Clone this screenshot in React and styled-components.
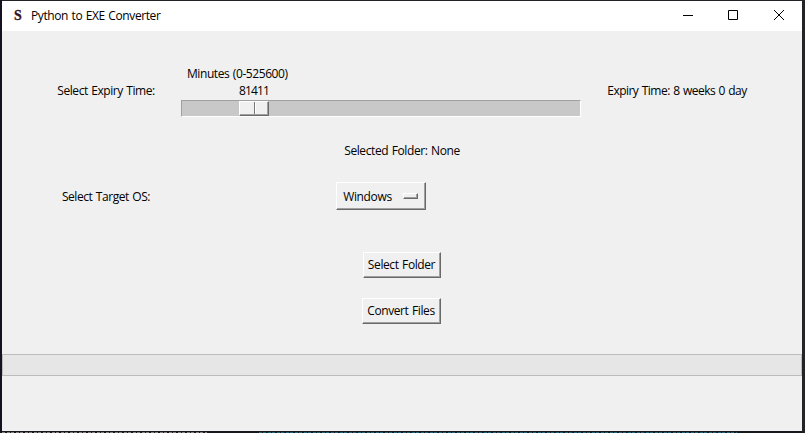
import React from "react";
import styled, { createGlobalStyle } from "styled-components";

const GlobalStyle = createGlobalStyle`
  * { box-sizing: border-box; }
  body { margin: 0; overflow: hidden; background: #18191d; }
`;

const Desktop = styled.div`
  width: 805px;
  height: 433px;
  padding: 1px 3px 0 2px;
  background: linear-gradient(90deg, #15121f 0 2px, #222326 2px);
  color: #000;
  font: 12px/16px "Open Sans", "Noto Sans", sans-serif;
`;

const AppWindow = styled.main`
  display: flex;
  flex-direction: column;
  height: 430px;
  background: #f0f0f0;
`;

const TitleBar = styled.header`
  display: flex;
  align-items: center;
  height: 30px;
  padding-left: 11px;
  background: #fff;
`;

const AppIcon = styled.span`
  width: 18px;
  color: #35101f;
  font: bold 14px/16px "Liberation Serif", serif;
  -webkit-text-stroke: 0.3px #35101f;
  padding-left: 1px;
`;

const Text = styled.span`
  white-space: nowrap;
  letter-spacing: ${({ $spacing = -0.45 }) => $spacing}px;
  word-spacing: 0.8px;
`;

const WindowControls = styled.div`
  display: flex;
  margin-left: auto;

  svg { display: block; width: 46px; height: 30px; fill: none; stroke: #000; }
`;

const FieldRow = styled.div`
  display: grid;
  grid-template-columns: 148px 400px 190px;
  column-gap: 1px;
  padding-left: 30px;
  margin-top: ${({ $top }) => $top}px;
`;

const Cell = styled.div`
  display: flex;
  justify-content: center;
  padding-top: ${({ $top = 0 }) => $top}px;
`;

const Scale = styled.div`
  display: flex;
  flex-direction: column;
`;

const ScaleCaption = styled.div`
  height: 17px;
  padding-left: ${({ $left }) => $left}px;
`;

const Trough = styled.div`
  height: 17px;
  padding-left: 57px;
  border: 1px solid;
  border-color: #a0a0a0 #fff #fff #a0a0a0;
  background: #c8c8c8;
`;

const Thumb = styled.div`
  display: flex;
  width: 30px;
  height: 15px;
  border: 1px solid;
  border-color: #fff #696969 #696969 #fff;
  box-shadow: inset -1px -1px #a0a0a0;
  background: #f0f0f0;

  &::before {
    content: "";
    width: 14px;
    height: 12px;
    border-right: 1px solid #777;
  }
  &::after {
    content: "";
    width: 1px;
    height: 12px;
    background: #fff;
  }
`;

const Status = styled.div`
  display: flex;
  justify-content: center;
  height: 16px;
  margin-top: 26px;
`;

const RaisedButton = styled.button`
  display: flex;
  align-items: center;
  justify-content: center;
  width: ${({ $width }) => $width}px;
  height: ${({ $height = 26 }) => $height}px;
  padding: ${({ $padTop = 0 }) => $padTop}px 1px 0 0;
  border: 1px solid;
  border-color: #fff #696969 #696969 #fff;
  border-radius: 0;
  box-shadow: inset -1px -1px #a0a0a0;
  background: #f0f0f0;
  color: #000;
  font: inherit;
`;

const MenuMark = styled.span`
  width: 15px;
  height: 6px;
  margin: 0 0 2px 11px;
  border: 1px solid;
  border-color: #fff #696969 #696969 #fff;
  box-shadow: inset -1px -1px #a0a0a0;
`;

const Actions = styled.div`
  display: flex;
  flex-direction: column;
  align-items: flex-end;
  gap: 20px;
  width: 439px;
  margin-top: 42px;
`;

const Progress = styled.div`
  height: 22px;
  margin-top: 30px;
  border: 1px solid #bcbcbc;
  background: #e6e6e6;
`;

const BackdropEdge = styled.div`
  height: 2px;
  background:
    repeating-linear-gradient(90deg, transparent 0 3px, #15171a 3px 5px, transparent 5px 8px, #15171a 8px 9px) 0 1px,
    linear-gradient(90deg, #85807c 0 205px, #15171a 205px 255px, #1c6177 255px 735px, #15171a 735px) 0 1px,
    #15171a;
  background-repeat: no-repeat;
`;

export default function App() {
  return (
    <>
      <GlobalStyle />
      <Desktop>
        <AppWindow>
          <TitleBar>
            <AppIcon>S</AppIcon>
            <Text $spacing={-0.4}>Python to EXE Converter</Text>
            <WindowControls>
              <svg viewBox="0 0 46 30"><path d="M19 14.5h10" /></svg>
              <svg viewBox="0 0 46 30"><path d="M18.5 9.5h9v9h-9z" /></svg>
              <svg viewBox="0 0 46 30"><path d="M18 9l10 10M28 9l-10 10" /></svg>
            </WindowControls>
          </TitleBar>
          <FieldRow $top={35}>
            <Cell $top={17}><Text>Select Expiry Time:</Text></Cell>
            <Scale>
              <ScaleCaption $left={6}><Text $spacing={-0.42}>Minutes (0-525600)</Text></ScaleCaption>
              <ScaleCaption $left={58}><Text $spacing={-0.85}>81411</Text></ScaleCaption>
              <Trough><Thumb /></Trough>
            </Scale>
            <Cell $top={17}><Text $spacing={-0.52}>Expiry Time: 8 weeks 0 day</Text></Cell>
          </FieldRow>
          <Status><Text $spacing={-0.4}>Selected Folder: None</Text></Status>
          <FieldRow $top={23}>
            <Cell $top={7}><Text>Select Target OS:</Text></Cell>
            <Cell>
              <RaisedButton $width={90} $height={28} $padTop={2}>
                <Text $spacing={-0.35}>Windows</Text>
                <MenuMark />
              </RaisedButton>
            </Cell>
          </FieldRow>
          <Actions>
            <RaisedButton $width={78}><Text $spacing={-0.4}>Select Folder</Text></RaisedButton>
            <RaisedButton $width={79}><Text $spacing={-0.4}>Convert Files</Text></RaisedButton>
          </Actions>
          <Progress />
        </AppWindow>
        <BackdropEdge />
      </Desktop>
    </>
  );
}
